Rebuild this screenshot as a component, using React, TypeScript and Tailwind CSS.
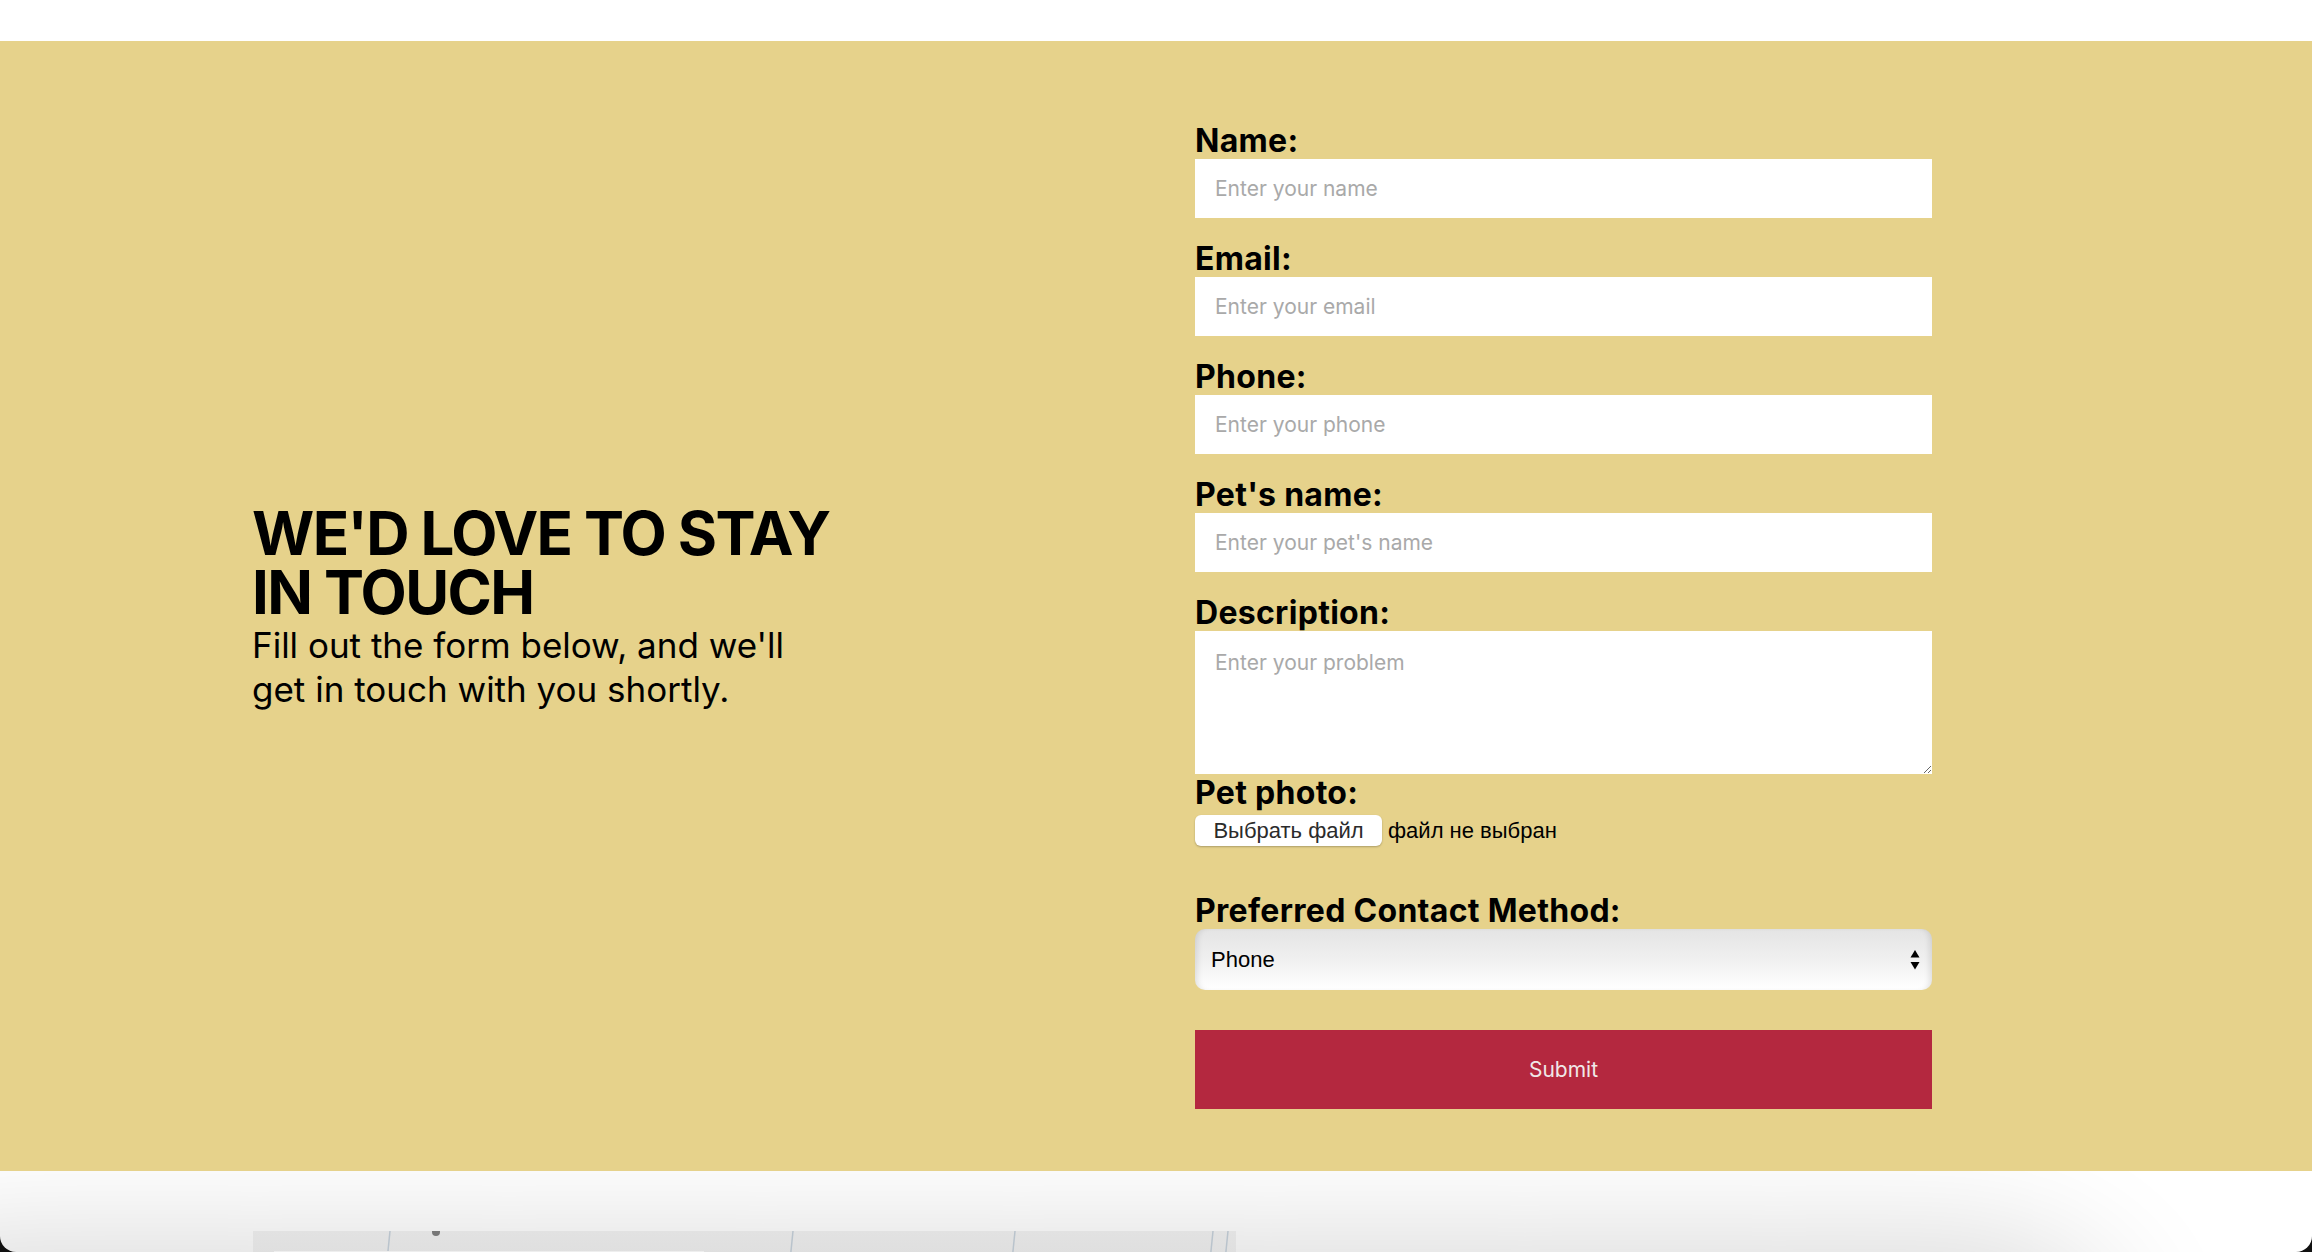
import React from "react";

const rubik = { fontFamily: "Inter, 'Noto Sans', sans-serif" };
const labelCls = "h-[36px] text-[32px] leading-[36px] font-bold tracking-[0.3px] text-black";

function Field({ label, placeholder, first }: { label: string; placeholder: string; first?: boolean }) {
  return (
    <div className={first ? "" : "mt-[23px]"}>
      <div className={labelCls}>{label}</div>
      <input
        className="block h-[59px] w-full bg-white px-[20px] text-[21px] text-black placeholder:text-[#a9a9a9] outline-none"
        placeholder={placeholder}
      />
    </div>
  );
}

export default function App() {
  return (
    <div className="relative h-[1252px] w-[2312px] overflow-hidden bg-white" style={rubik}>
      <div className="h-[41px] bg-white" />
      <section className="flex bg-[#e6d28b] pt-[82px] pb-[62px]">
        <div className="flex w-[1195px] items-center pl-[252px] pb-[18px]">
          <div>
            <h2 className="text-[60px] font-bold leading-[59px] tracking-[-1.6px] text-black">
              WE'D LOVE TO STAY
              <br />
              IN TOUCH
            </h2>
            <p className="mt-[1px] w-[570px] text-[35px] leading-[44px] text-black">
              Fill out the form below, and we'll get in touch with you shortly.
            </p>
          </div>
        </div>
        <form className="w-[737px]" onSubmit={(e) => e.preventDefault()}>
          <Field first label="Name:" placeholder="Enter your name" />
          <Field label="Email:" placeholder="Enter your email" />
          <Field label="Phone:" placeholder="Enter your phone" />
          <Field label="Pet's name:" placeholder="Enter your pet's name" />
          <div className="mt-[23px]">
            <div className={labelCls}>Description:</div>
            <textarea
              className="block h-[143px] w-full bg-white px-[20px] pt-[16px] text-[21px] text-black placeholder:text-[#a9a9a9] outline-none"
              placeholder="Enter your problem"
            />
          </div>
          <div className={"mt-[1px] " + labelCls}>Pet photo:</div>
          <div
            className="mt-[4px] flex h-[31px] items-center"
            style={{ fontFamily: "'Liberation Sans', Arial, sans-serif" }}
          >
            <span className="flex h-[31px] w-[187px] items-center justify-center rounded-[6px] bg-white text-[22px] text-[#2b2b2b] shadow-[0_1px_2px_rgba(0,0,0,0.25)]">
              Выбрать файл
            </span>
            <span className="ml-[6px] text-[22px] text-black">файл не выбран</span>
          </div>
          <div className={"mt-[47px] " + labelCls}>Preferred Contact Method:</div>
          <div className="relative h-[61px] w-full">
            <select
              className="h-[61px] w-full appearance-none rounded-[10px] bg-gradient-to-b from-[#e4e4e4] via-[#f0f0f0] to-white pl-[16px] text-[22px] text-black shadow-[inset_6px_0_6px_-4px_rgba(0,0,0,0.12),inset_-6px_0_6px_-4px_rgba(0,0,0,0.12)] outline-none"
              style={{ fontFamily: "'Liberation Sans', Arial, sans-serif" }}
              defaultValue="Phone"
            >
              <option>Phone</option>
              <option>Email</option>
            </select>
            <svg className="pointer-events-none absolute right-[12px] top-[20px]" width="10" height="22" viewBox="0 0 10 22">
              <path d="M5 1 L9.5 8.5 L0.5 8.5 Z" fill="#000" />
              <path d="M0.5 13 L9.5 13 L5 20.5 Z" fill="#000" />
            </svg>
          </div>
          <button
            type="submit"
            className="mt-[40px] h-[79px] w-full bg-[#b4283f] text-[21px] text-[#f0e8e8]"
          >
            Submit
          </button>
        </form>
      </section>
      <div className="relative h-[81px] overflow-hidden bg-white">
        <div className="absolute left-[-100px] top-[140px] h-[300px] w-[2160px] rounded-[80px] bg-[#e0e0e0] shadow-[0_0_130px_70px_rgba(0,0,0,0.16)]" />
        <div className="absolute left-[253px] top-[60px] h-[60px] w-[983px] bg-gradient-to-b from-[#e2e2e2] to-[#dadada]">
          <svg className="absolute inset-0" width="983" height="60" viewBox="0 0 983 60">
            <line x1="137" y1="0" x2="131" y2="60" stroke="#b9c3cc" strokeWidth="1.5" />
            <line x1="540" y1="0" x2="534" y2="60" stroke="#b9c3cc" strokeWidth="1.5" />
            <line x1="762" y1="0" x2="756" y2="60" stroke="#b9c3cc" strokeWidth="1.5" />
            <line x1="960" y1="0" x2="954" y2="60" stroke="#b9c3cc" strokeWidth="1.5" />
            <line x1="975" y1="0" x2="969" y2="60" stroke="#b9c3cc" strokeWidth="1.5" />
            <circle cx="183" cy="1" r="4" fill="#777" />
          </svg>
          <div className="absolute left-[21px] top-[20px] h-[3px] w-[430px] bg-[#eeeeee]" />
        </div>
      </div>
      <div className="pointer-events-none absolute bottom-0 left-0 h-[16px] w-[16px] overflow-hidden">
        <div className="absolute bottom-0 left-0 h-[32px] w-[32px] rounded-full shadow-[0_0_0_20px_#111]" />
      </div>
      <div className="pointer-events-none absolute bottom-0 right-0 h-[16px] w-[16px] overflow-hidden">
        <div className="absolute bottom-0 right-0 h-[32px] w-[32px] rounded-full shadow-[0_0_0_20px_#111]" />
      </div>
    </div>
  );
}
